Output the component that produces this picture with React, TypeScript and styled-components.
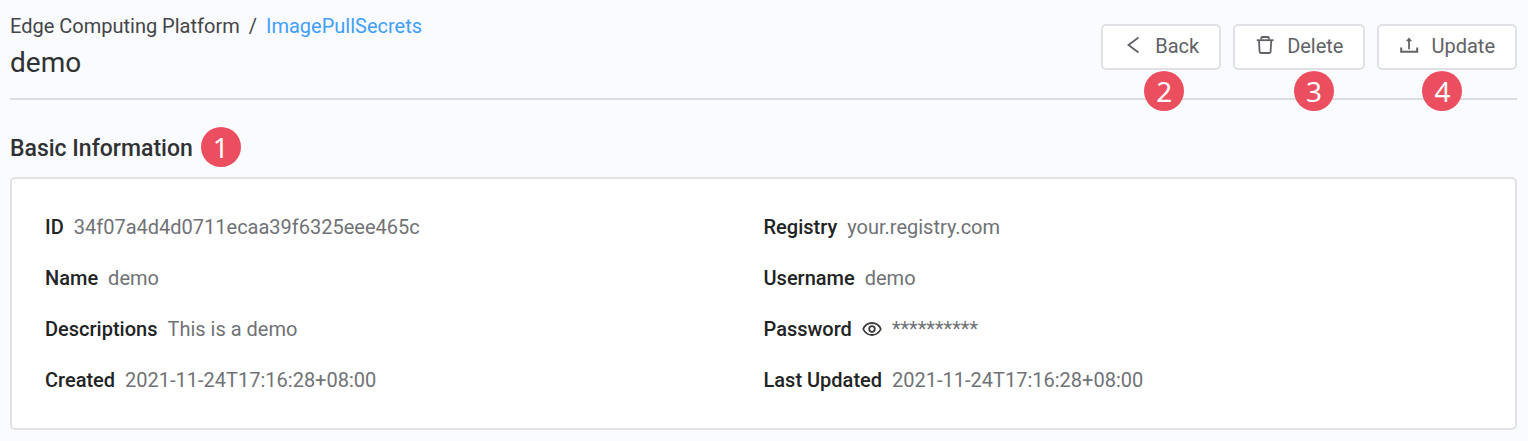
import React from "react";
import styled, { createGlobalStyle } from "styled-components";

const GlobalStyle = createGlobalStyle`
  *, *::before, *::after { box-sizing: border-box; }
  body {
    margin: 0;
    background: #fafbff;
    color: #303133;
    font-family: Roboto, "Liberation Sans", sans-serif;
    font-size: 20px;
    line-height: 24px;
  }
`;

const Page = styled.main`
  padding: 14px 11px 11px 10px;
`;

const Header = styled.header`
  display: flex;
  justify-content: space-between;
  align-items: flex-start;
  padding-bottom: 18px;
  border-bottom: 2px solid #dcdde0;
`;

const Breadcrumb = styled.nav`
  display: flex;
  gap: 9px;
  color: #444547;
`;

const Crumb = styled.a`
  color: #409eff;
  text-decoration: none;
`;

const Title = styled.h1`
  margin: 8px 0 0;
  font-size: 28px;
  line-height: 34px;
  font-weight: 400;
`;

const Actions = styled.div`
  display: flex;
  gap: 12px;
  padding-top: 10px;
`;

const ActionSlot = styled.div`
  position: relative;
`;

const ActionButton = styled.button`
  display: flex;
  align-items: center;
  gap: 12px;
  height: 46px;
  padding: 0 20px 2px;
  border: 2px solid #e0e1e4;
  border-radius: 5px;
  background: #fff;
  color: #606266;
  font: inherit;
  cursor: pointer;

  svg {
    display: block;
    margin-bottom: 3px;
  }
`;

const Badge = styled.span`
  display: flex;
  align-items: center;
  justify-content: center;
  width: 40px;
  height: 40px;
  border-radius: 50%;
  background: #eb4e5f;
  color: #fff;
  font-family: "Noto Sans", sans-serif;
  font-size: 28px;
  line-height: 40px;
  font-weight: 400;
`;

const ActionBadge = styled(Badge)<{ $left: number }>`
  position: absolute;
  top: 47px;
  left: ${(p) => p.$left}px;
`;

const SectionHead = styled.div`
  display: flex;
  align-items: center;
  gap: 8px;
  margin: 27px 0 10px;
`;

const SectionTitle = styled.h2`
  margin: 0;
  padding-top: 3px;
  font-size: 23px;
  line-height: 28px;
  font-weight: 500;
`;

const Card = styled.section`
  padding: 36px 33px;
  border: 2px solid #e2e2e4;
  border-radius: 5px;
  background: #fff;
`;

const Details = styled.dl`
  display: grid;
  grid-template-columns: 1fr 1fr;
  row-gap: 27px;
  margin: 0;
`;

const Field = styled.div`
  display: flex;
  align-items: center;
  gap: 10px;
`;

const Label = styled.dt`
  color: #222325;
  font-weight: 500;
`;

const Value = styled.dd`
  display: flex;
  align-items: center;
  gap: 10px;
  margin: 0;
  color: #707276;
`;

const RevealButton = styled.button`
  display: flex;
  padding: 0;
  border: 0;
  background: none;
  color: #3a3b3d;
  cursor: pointer;
`;

const iconProps = {
  width: 20,
  height: 20,
  viewBox: "0 0 20 20",
  fill: "none",
  stroke: "currentColor",
  strokeWidth: 1.8,
  "aria-hidden": true,
};

const BackIcon = () => (
  <svg {...iconProps}>
    <path d="M15.5 2.5 5.5 10l10 7.5" />
  </svg>
);

const TrashIcon = () => (
  <svg {...iconProps}>
    <path d="M1.8 5.2h16.8" />
    <path
      d="M6.3 4.6V3q0-1 1-1h5.6q1 0 1 1v1.6M4 5.6l.6 11.2q.1 1.2 1.2 1.2h8.6q1.1 0 1.2-1.2l.6-11.2"
    />
  </svg>
);

const UploadIcon = () => (
  <svg {...iconProps}>
    <path d="M10 14.2V5" />
    <path d="M2.2 12.6v4.2h16v-4.2" strokeWidth="2" />
    <path d="M6.9 6.3 10 2.4l3.1 3.9z" fill="currentColor" stroke="none" />
  </svg>
);

const EyeIcon = () => (
  <svg {...iconProps}>
    <path d="M1.2 10C3 6 6 4 10 4s7 2 8.8 6c-1.8 4-4.8 6-8.8 6s-7-2-8.8-6z" />
    <circle cx="10" cy="10" r="2.8" />
  </svg>
);

const actions = [
  { label: "Back", Icon: BackIcon, mark: 2, left: 43 },
  { label: "Delete", Icon: TrashIcon, mark: 3, left: 61 },
  { label: "Update", Icon: UploadIcon, mark: 4, left: 45 },
];

const fields = [
  { label: "ID", value: "34f07a4d4d0711ecaa39f6325eee465c" },
  { label: "Registry", value: "your.registry.com" },
  { label: "Name", value: "demo" },
  { label: "Username", value: "demo" },
  { label: "Descriptions", value: "This is a demo" },
  { label: "Password", value: "**********", secret: true },
  { label: "Created", value: "2021-11-24T17:16:28+08:00" },
  { label: "Last Updated", value: "2021-11-24T17:16:28+08:00" },
];

export default function App() {
  return (
    <Page>
      <GlobalStyle />
      <Header>
        <div>
          <Breadcrumb aria-label="Breadcrumb">
            <span>Edge Computing Platform</span>
            <span>/</span>
            <Crumb href="#">ImagePullSecrets</Crumb>
          </Breadcrumb>
          <Title>demo</Title>
        </div>
        <Actions>
          {actions.map(({ label, Icon, mark, left }) => (
            <ActionSlot key={label}>
              <ActionButton type="button">
                <Icon />
                {label}
              </ActionButton>
              <ActionBadge $left={left}>{mark}</ActionBadge>
            </ActionSlot>
          ))}
        </Actions>
      </Header>
      <SectionHead>
        <SectionTitle>Basic Information</SectionTitle>
        <Badge>1</Badge>
      </SectionHead>
      <Card>
        <Details>
          {fields.map(({ label, value, secret }) => (
            <Field key={label}>
              <Label>{label}</Label>
              <Value>
                {secret && (
                  <RevealButton type="button" aria-label="Show password">
                    <EyeIcon />
                  </RevealButton>
                )}
                {value}
              </Value>
            </Field>
          ))}
        </Details>
      </Card>
    </Page>
  );
}
